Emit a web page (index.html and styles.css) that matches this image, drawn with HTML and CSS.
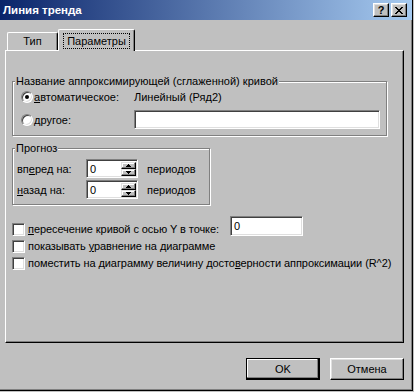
FILE: index.html
```html
<!DOCTYPE html>
<html lang="ru">
<head>
    <meta charset="UTF-8">
    <title>Линия тренда</title>
    <link rel="stylesheet" href="styles.css">
</head>
<body>

<div class="window">
    <div class="titlebar">
        <span class="title">Линия тренда</span>
        <div class="caption-btns">
            <span class="cbtn help">?</span>
            <span class="cbtn close">
                <svg width="8" height="7" viewBox="0 0 8 7" shape-rendering="crispEdges">
                    <path d="M0 0h2v1H0z M6 0h2v1H6z M1 1h2v1H1z M5 1h2v1H5z M2 2h4v1H2z M3 3h2v1H3z M2 4h4v1H2z M1 5h2v1H1z M5 5h2v1H5z M0 6h2v1H0z M6 6h2v1H6z" fill="#000"/>
                </svg>
            </span>
        </div>
    </div>

    <div class="client">
        <div class="tabs">
            <div class="tab">Тип</div>
            <div class="tab active"><span class="focus">Параметры</span></div>
        </div>

        <div class="panel">
            <!-- trend line name -->
            <div class="group group-name">
                <div class="legend">Название аппроксимирующей (сглаженной) кривой</div>
                <div class="radio-row first">
                    <span class="radio checked"></span>
                    <span class="opt-label"><u>а</u>втоматическое:</span>
                    <span>Линейный (Ряд2)</span>
                </div>
                <div class="radio-row">
                    <span class="radio"></span>
                    <span class="opt-label"><u>д</u>ругое:</span>
                    <span class="field wide"></span>
                </div>
            </div>

            <!-- forecast -->
            <div class="group group-forecast">
                <div class="legend">Прогноз</div>
                <div class="spin-row first">
                    <span class="spin-label">вп<u>е</u>ред на:</span>
                    <span class="field spin">
                        <span class="spin-val">0</span>
                        <span class="spin-btns">
                            <span class="sbtn"><svg width="5" height="3" viewBox="0 0 5 3" shape-rendering="crispEdges"><path d="M2 0h1v1h1v1h1v1H0V2h1V1h1z" fill="#000"/></svg></span>
                            <span class="sbtn"><svg width="5" height="3" viewBox="0 0 5 3" shape-rendering="crispEdges"><path d="M0 0h5v1H4v1H3v1H2V2H1V1H0z" fill="#000"/></svg></span>
                        </span>
                    </span>
                    <span class="unit">периодов</span>
                </div>
                <div class="spin-row">
                    <span class="spin-label"><u>н</u>азад на:</span>
                    <span class="field spin">
                        <span class="spin-val">0</span>
                        <span class="spin-btns">
                            <span class="sbtn"><svg width="5" height="3" viewBox="0 0 5 3" shape-rendering="crispEdges"><path d="M2 0h1v1h1v1h1v1H0V2h1V1h1z" fill="#000"/></svg></span>
                            <span class="sbtn"><svg width="5" height="3" viewBox="0 0 5 3" shape-rendering="crispEdges"><path d="M0 0h5v1H4v1H3v1H2V2H1V1H0z" fill="#000"/></svg></span>
                        </span>
                    </span>
                    <span class="unit">периодов</span>
                </div>
            </div>

            <!-- options -->
            <div class="checks">
                <div class="check-row first">
                    <span class="checkbox"></span>
                    <span class="check-label intercept"><u>п</u>ересечение кривой с осью Y в точке:</span>
                    <span class="field small"><span class="field-val">0</span></span>
                </div>
                <div class="check-row">
                    <span class="checkbox"></span>
                    <span class="check-label">показывать <u>у</u>равнение на диаграмме</span>
                </div>
                <div class="check-row">
                    <span class="checkbox"></span>
                    <span class="check-label">поместить на диаграмму величину досто<u>в</u>ерности аппроксимации (R^2)</span>
                </div>
            </div>
        </div>

        <div class="buttons">
            <span class="btn default">OK</span>
            <span class="btn">Отмена</span>
        </div>
    </div>
</div>

</body>
</html>
```

FILE: styles.css
```css
* {
    box-sizing: border-box;
}
body {
    margin: 0;
    background: #c0c0c0;
    font-family: "Liberation Sans", Arial, sans-serif;
    font-size: 11px;
    color: #000;
}
u {
    text-decoration: underline;
    text-underline-offset: 1px;
}

.window {
    width: 413px;
    height: 391px;
    background: #c0c0c0;
    border-right: 1px solid #000;
    border-bottom: 1px solid #000;
    box-shadow: inset -1px -1px #808080;
}

/* title bar */
.titlebar {
    height: 20px;
    background: linear-gradient(to right, #0a246a, #a6caf0);
    display: flex;
    align-items: center;
    justify-content: space-between;
    padding: 0 5px 0 3px;
}
.title {
    color: #fff;
    font-weight: bold;
    font-size: 11.5px;
}
.caption-btns {
    display: flex;
    gap: 2px;
}
.cbtn {
    width: 16px;
    height: 14px;
    background: #c0c0c0;
    border: 1px solid;
    border-color: #fff #000 #000 #fff;
    box-shadow: inset -1px -1px #808080, inset 1px 1px #dfdfdf;
    display: flex;
    align-items: center;
    justify-content: center;
}
.help {
    font-weight: bold;
    font-size: 11px;
    line-height: 12px;
}

/* client area */
.client {
    padding: 9px 0 0 5px;
}
.tabs {
    display: flex;
    align-items: flex-end;
    height: 21px;
    margin-left: 2px;
}
.tab {
    width: 51px;
    height: 18px;
    border-top: 1px solid #fff;
    border-left: 1px solid #fff;
    border-right: 1px solid #000;
    border-radius: 2px 2px 0 0;
    box-shadow: inset -1px 0 #808080;
    display: flex;
    align-items: center;
    justify-content: center;
    line-height: 13px;
}
.tab.active {
    width: 77px;
    height: 22px;
    margin-bottom: -1px;
    position: relative;
    z-index: 1;
    background: #c0c0c0;
    align-items: flex-start;
    padding-top: 3px;
}
.focus {
    border: 1px dotted #000;
    padding: 0 3px;
    line-height: 14px;
}

.panel {
    width: 399px;
    height: 293px;
    border: 1px solid;
    border-color: #fff #000 #000 #fff;
    box-shadow: inset -1px -1px #808080;
    padding: 30px 0 0 6px;
}

/* group boxes */
.group {
    border: 1px solid #808080;
    box-shadow: inset 1px 1px #fff, 1px 1px #fff;
}
.legend {
    width: fit-content;
    margin: -7px 0 0 2px;
    padding: 0 1px;
    line-height: 13px;
    background: #c0c0c0;
    position: relative;
}
.group-name {
    width: 375px;
    height: 55px;
}
.group-forecast {
    width: 198px;
    height: 57px;
    margin-top: 12px;
}

.radio-row {
    display: flex;
    align-items: center;
    margin: 6px 0 0 8px;
    height: 19px;
}
.radio-row.first {
    margin-top: 1px;
    height: 15px;
}
.radio {
    width: 12px;
    height: 12px;
    border-radius: 50%;
    background: #fff;
    border: 1px solid;
    border-color: #808080 #fff #fff #808080;
    box-shadow: inset 1px 1px #404040, inset -1px -1px #dfdfdf;
    display: flex;
    align-items: center;
    justify-content: center;
}
.radio.checked::after {
    content: "";
    width: 4px;
    height: 4px;
    background: #000;
    border-radius: 50%;
}
.opt-label {
    width: 100px;
    margin-left: 1px;
}

/* sunken fields */
.field {
    display: flex;
    align-items: center;
    background: #fff;
    border: 1px solid;
    border-color: #808080 #fff #fff #808080;
    box-shadow: inset 1px 1px #404040, inset -1px -1px #dfdfdf;
}
.field.wide {
    width: 246px;
    height: 19px;
}
.field.small {
    width: 73px;
    height: 20px;
}
.field-val {
    padding-left: 3px;
}

.spin-row {
    display: flex;
    align-items: center;
    height: 19px;
    margin: 2px 0 0 4px;
}
.spin-row.first {
    margin-top: 4px;
}
.spin-label {
    width: 69px;
}
.spin {
    width: 52px;
    height: 19px;
    padding: 2px 1px 1px 2px;
    align-items: stretch;
}
.spin-val {
    flex: 1;
    padding-left: 1px;
    line-height: 14px;
}
.spin-btns {
    width: 15px;
    display: flex;
    flex-direction: column;
}
.sbtn {
    flex: 1;
    background: #c0c0c0;
    border: 1px solid;
    border-color: #dfdfdf #000 #000 #dfdfdf;
    box-shadow: inset -1px -1px #808080, inset 1px 1px #fff;
    display: flex;
    align-items: center;
    justify-content: center;
}
.sbtn svg {
    display: block;
}
.unit {
    margin-left: 9px;
}

/* check boxes */
.checks {
    margin-top: 11px;
}
.check-row {
    display: flex;
    align-items: flex-end;
    margin-top: 4px;
}
.check-row.first {
    margin-top: 0;
}
.checkbox {
    width: 13px;
    height: 13px;
    flex: none;
    background: #fff;
    border: 1px solid;
    border-color: #808080 #fff #fff #808080;
    box-shadow: inset 1px 1px #404040, inset -1px -1px #dfdfdf;
}
.check-label {
    margin-left: 3px;
    line-height: 13px;
    white-space: nowrap;
    letter-spacing: -0.08px;
}
.check-label.intercept {
    width: 202px;
}

/* dialog buttons */
.buttons {
    width: 399px;
    margin-top: 15px;
    display: flex;
    justify-content: flex-end;
    gap: 10px;
}
.btn {
    width: 74px;
    height: 22px;
    background: #c0c0c0;
    border: 1px solid;
    border-color: #fff #000 #000 #fff;
    box-shadow: inset -1px -1px #808080, inset 1px 1px #dfdfdf;
    display: flex;
    align-items: center;
    justify-content: center;
}
.btn.default {
    border: 1px solid #000;
    box-shadow: inset -1px -1px #000, inset -2px -2px #808080, inset 1px 1px #fff;
}
```
